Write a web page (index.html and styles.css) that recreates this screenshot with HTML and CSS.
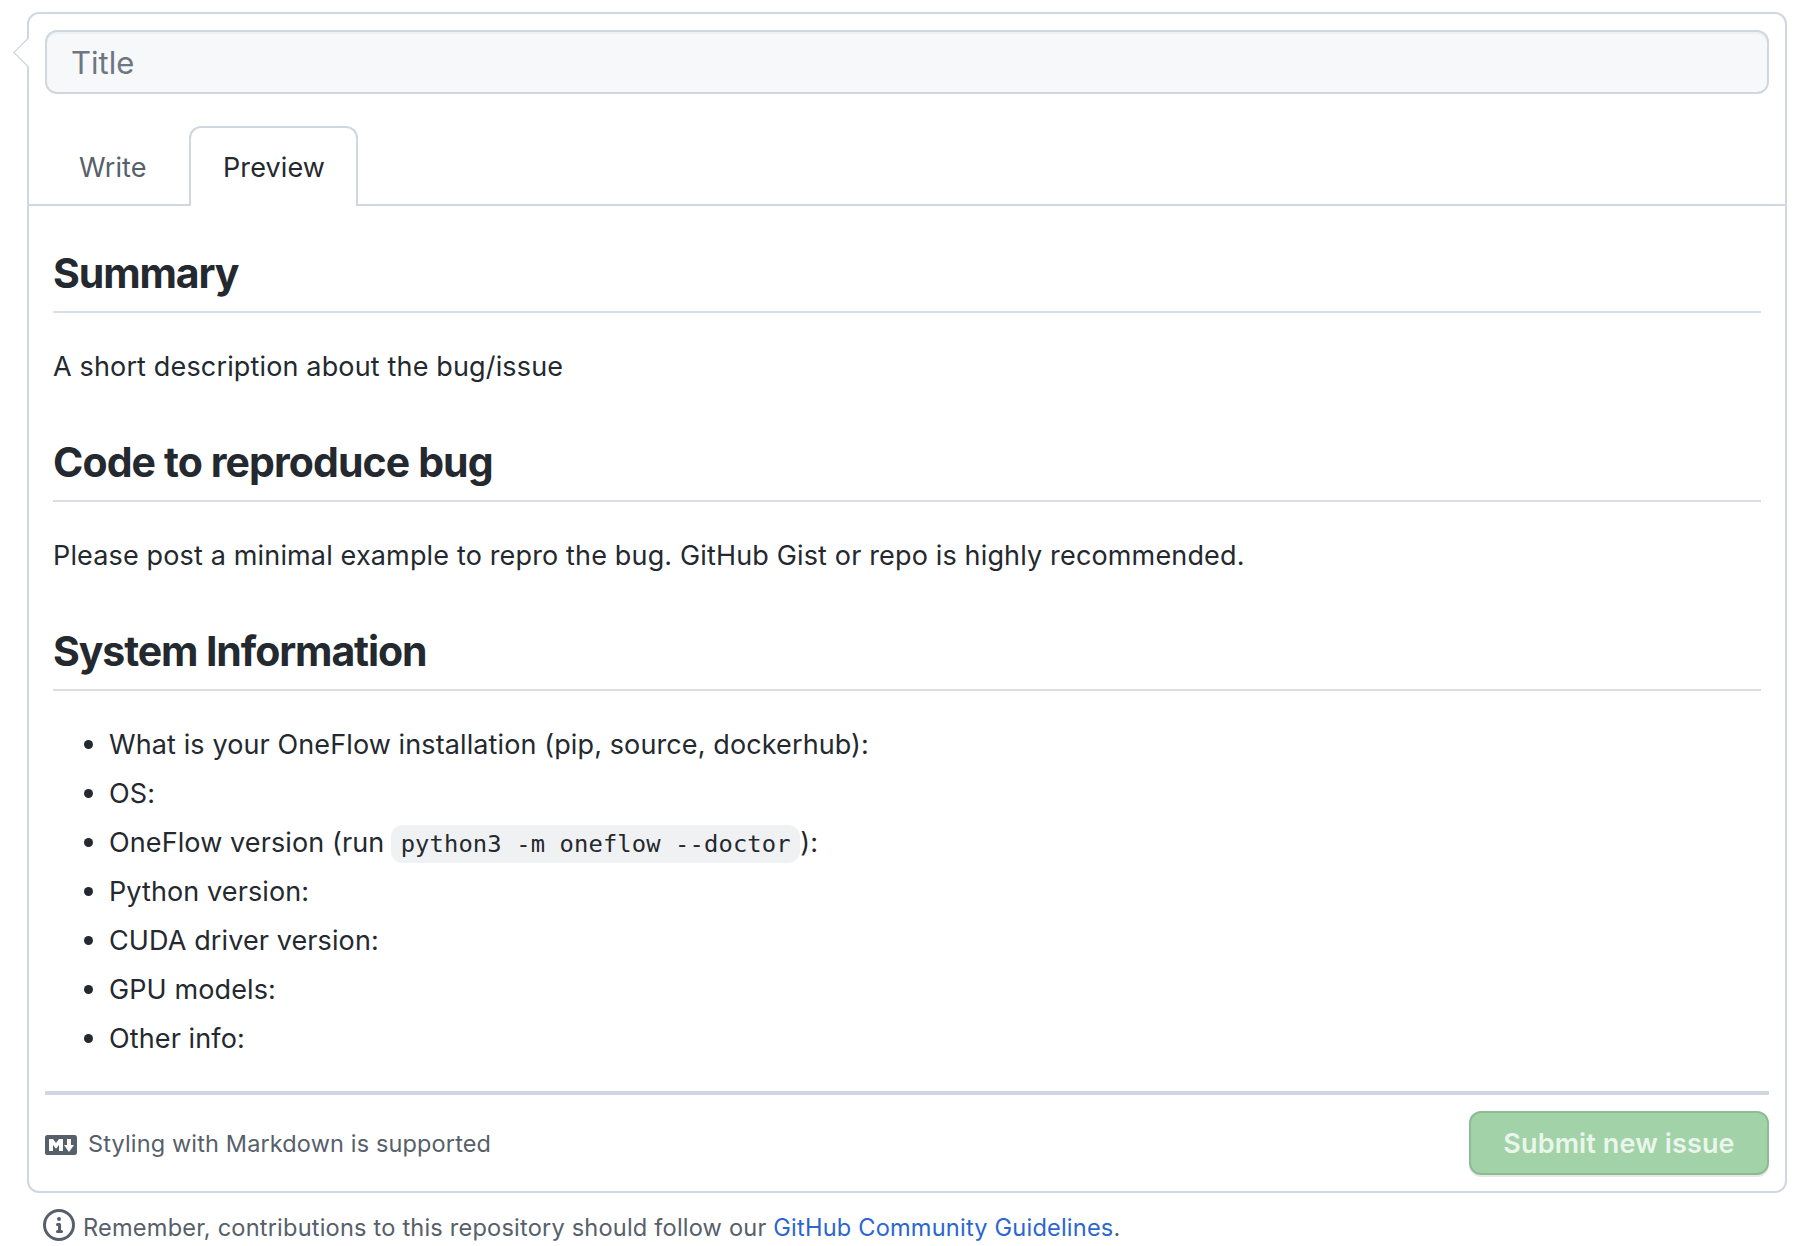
FILE: index.html
```html
<!DOCTYPE html>
<html lang="en">
<head>
<meta charset="utf-8">
<title>New issue</title>
<link rel="stylesheet" href="styles.css">
</head>
<body>
<main class="page">
  <form class="issue-box">
    <svg class="caret" width="17" height="32" viewBox="0 0 17 32"><path d="M17 1.5V30.5L15 29.2L.8 15.5L15 1.8Z" fill="#fff"/><path d="M15.2 1.3L.8 15.5L15.2 29.7" fill="none" stroke="#d0d7de" stroke-width="1.3"/></svg>
    <div class="title-field"><input class="title-input" type="text" placeholder="Title" aria-label="Title"></div>
    <nav class="tabs">
      <button type="button" class="tab">Write</button>
      <button type="button" class="tab tab-active">Preview</button>
    </nav>
    <article class="markdown">
      <h2 class="tight">Summary</h2>
      <p>A short description about the bug/issue</p>
      <h2>Code to reproduce bug</h2>
      <p>Please post a minimal example to repro the bug. GitHub Gist or repo is highly recommended.</p>
      <h2 class="tight">System Information</h2>
      <ul>
        <li>What is your OneFlow installation (pip, source, dockerhub):</li>
        <li>OS:</li>
        <li>OneFlow version (run <code>python3 -m oneflow --doctor</code>):</li>
        <li>Python version:</li>
        <li>CUDA driver version:</li>
        <li>GPU models:</li>
        <li>Other info:</li>
      </ul>
    </article>
    <footer class="actions">
      <a class="markdown-hint">
        <svg width="32" height="20" viewBox="0 3 16 10" fill="currentColor"><path fill-rule="evenodd" d="M14.85 3H1.15C.52 3 0 3.52 0 4.15v7.69C0 12.48.52 13 1.15 13h13.69c.64 0 1.15-.52 1.15-1.15v-7.7C16 3.52 15.48 3 14.85 3zM9 11H7V8L5.5 9.92 4 8v3H2V5h2l1.5 2L7 5h2v6zm2.99.5L9.5 8H11V5h2v3h1.5l-2.51 3.5z"/></svg>
        <span>Styling with Markdown is supported</span>
      </a>
      <button type="button" class="submit">Submit new issue</button>
    </footer>
  </form>
  <div class="reminder">
    <svg width="32" height="32" viewBox="0 0 16 16" fill="currentColor"><path fill-rule="evenodd" d="M8 1.5a6.5 6.5 0 100 13 6.5 6.5 0 000-13zM0 8a8 8 0 1116 0A8 8 0 010 8zm6.5-.25A.75.75 0 017.25 7h1a.75.75 0 01.75.75v2.75h.25a.75.75 0 010 1.5h-2a.75.75 0 010-1.5h.25v-2h-.25a.75.75 0 01-.75-.75zM8 6a1 1 0 100-2 1 1 0 000 2z"/></svg>
    <span>Remember, contributions to this repository should follow our <a class="link">GitHub Community Guidelines</a>.</span>
  </div>
</main>
</body>
</html>
```
FILE: styles.css
```css
* { box-sizing: border-box; }
body {
  margin: 0;
  background: #fff;
  color: #24292f;
  font-family: Inter, "Liberation Sans", sans-serif;
  font-size: 27px;
  line-height: 42px;
  overflow: hidden;
}
button, input { font: inherit; letter-spacing: inherit; }
svg { display: block; flex: none; }
.page { padding: 12px 23px 0 27px; }
.issue-box {
  position: relative;
  height: 1181px;
  border: 2px solid #d0d7de;
  border-radius: 12px;
}
.caret { position: absolute; left: -16px; top: 23px; }
.title-field { padding: 16px 16px 0; }
.title-input {
  display: block;
  width: 100%;
  height: 64px;
  padding: 0 24px;
  border: 2px solid #d0d7de;
  border-radius: 12px;
  background: #f6f8fa;
  box-shadow: inset 0 2px 0 rgba(208, 215, 222, .2);
  font-size: 31px;
}
.title-input::placeholder { color: #6e7781; opacity: 1; }
.tabs {
  display: flex;
  height: 80px;
  margin-top: 32px;
  padding-left: 16px;
  border-bottom: 2px solid #d0d7de;
}
.tab {
  height: 80px;
  width: 144px;
  padding: 2px 0 0 32px;
  border: 2px solid transparent;
  border-bottom: 0;
  border-radius: 12px 12px 0 0;
  background: none;
  color: #57606a;
  text-align: left;
  letter-spacing: .1px;
}
.tab-active {
  width: 169px;
  border-color: #d0d7de;
  background: #fff;
  color: #24292f;
}
.markdown { padding: 41px 24px 31px; letter-spacing: .15px; }
.markdown h2 {
  margin: 47px 0 33px;
  padding-bottom: 11.5px;
  border-bottom: 2px solid #d8dee4;
  font-size: 41px;
  font-weight: 650;
  line-height: 52.5px;
  letter-spacing: -.9px;
}
.markdown h2.tight { letter-spacing: -1.1px; }
.markdown h2:first-child { margin-top: 0; }
.markdown p { margin: 0 0 48px; }
.markdown ul { margin: 0; padding-left: 56px; list-style: none; letter-spacing: .11px; }
.markdown li { position: relative; height: 42px; }
.markdown li + li { margin-top: 7px; }
.markdown li::before {
  content: "";
  position: absolute;
  left: -25px;
  top: 16px;
  width: 9px;
  height: 9px;
  border-radius: 50%;
  background: #24292f;
}
.markdown code {
  margin-left: -1px;
  padding: 4.8px 9.5px;
  border-radius: 12px;
  background: rgba(175, 184, 193, .2);
  font-family: "DejaVu Sans Mono", monospace;
  font-size: 23.8px;
  letter-spacing: .12px;
}
.actions {
  display: flex;
  justify-content: space-between;
  margin: 0 16px;
  padding-top: 16px;
  border-top: 4px solid #d0d7de;
}
.markdown-hint {
  display: flex;
  align-items: center;
  gap: 11px;
  height: 64px;
  padding-top: 3px;
  color: #57606a;
  font-size: 23.5px;
  letter-spacing: .14px;
}
.markdown-hint span { padding-bottom: 2px; }
.submit {
  width: 300px;
  height: 64px;
  padding: 2px 0 0;
  border: 2px solid #8fbb94;
  border-radius: 12px;
  background: #a2d2a8;
  box-shadow: 0 2px 0 rgba(27, 31, 36, .1);
  color: rgba(255, 255, 255, .8);
  font-weight: 600;
  letter-spacing: .12px;
}
.reminder {
  display: flex;
  align-items: center;
  gap: 8px;
  margin: 16px 0 0 16px;
  height: 32px;
  color: #57606a;
  font-size: 23.6px;
  letter-spacing: .19px;
}
.reminder span { padding-top: 5px; }
.link { color: #2c66d0; }
```
